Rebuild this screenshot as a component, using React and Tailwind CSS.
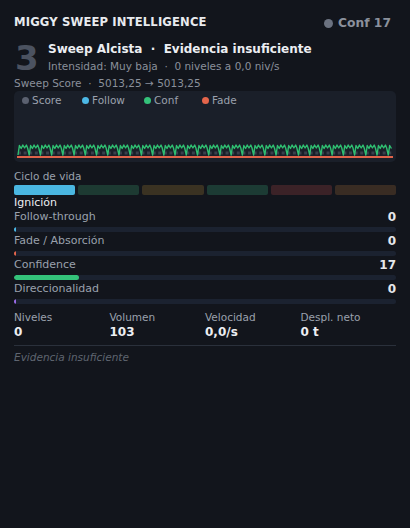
import React from "react";

function Wave() {
  const W = 382, H = 71;
  const x0 = 4, x1 = 378;
  const period = 11.22;
  let g = "";
  let s = "";
  const n = Math.floor((x1 - x0) / period);
  for (let i = 0; i <= n; i++) {
    const b = x0 + i * period;
    const pts = [
      [0, 64], [1.4, 54.5], [3.2, 57.5], [4.8, 54], [6.6, 57], [8.4, 54], [9.6, 57], [11.22, 64],
    ];
    pts.forEach(([dx, y], k) => {
      const x = b + dx;
      if (x > x1) return;
      g += (i === 0 && k === 0 ? "M" : "L") + x.toFixed(2) + " " + y + " ";
    });
  }
  for (let x = x0; x < x1; x += 5.61) {
    s += `M${x.toFixed(2)} 62 L${(x + 3).toFixed(2)} 62 `;
  }
  return (
    <svg width={W} height={H} viewBox={`0 0 ${W} ${H}`} className="absolute left-0 top-0">
      <path d={s} stroke="#3a404c" strokeWidth="3" fill="none" />
      <path d={g} stroke="#2fbf71" strokeWidth="1.4" fill="none" strokeLinejoin="round" />
      <line x1={x0 - 1} y1={66} x2={x1 + 1} y2={66} stroke="#e0634a" strokeWidth="1.8" />
    </svg>
  );
}

function Metric({ label, value, color, pct }) {
  return (
    <div className="flex flex-col mb-[2px]">
      <div className="flex justify-between items-end h-[14px]">
        <span className="text-[11px] text-[#9aa1ad] leading-[14px]">{label}</span>
        <span className="text-[12px] font-bold text-[#e5e7eb] leading-[14px]">{value}</span>
      </div>
      <div className="h-[5px] rounded-full bg-[#1b2230] mt-[3px] overflow-hidden">
        <div className="h-full rounded-full" style={{ width: pct, background: color }} />
      </div>
    </div>
  );
}

export default function App() {
  return (
    <div
      className="w-[410px] h-[528px] bg-[#12151c] px-[14px] pt-[14px] text-[#e5e7eb]"
      style={{ fontFamily: '"DejaVu Sans", sans-serif' }}
    >
      <div className="flex items-center justify-between h-[18px]">
        <span className="text-[11.6px] font-bold tracking-[0.15px] text-[#e8eaee]">MIGGY SWEEP INTELLIGENCE</span>
        <span className="flex items-center gap-[5px] mr-[5px]">
          <span className="w-[9px] h-[9px] rounded-full bg-[#6b7280]" />
          <span className="text-[12.3px] font-bold text-[#8b919c]">Conf 17</span>
        </span>
      </div>
      <div className="flex mt-[8px] h-[36px]">
        <div className="w-[34px] h-[36px] text-[34px] font-bold text-[#4b5260] leading-[34px] pt-[1px] pl-[1px]">3</div>
        <div className="flex flex-col">
          <span className="text-[12px] font-bold text-[#eceef2] leading-[18px]">Sweep Alcista&nbsp; · &nbsp;Evidencia insuficiente</span>
          <span className="text-[10.5px] text-[#8a909b] leading-[14px] mt-[1px]">Intensidad: Muy baja&nbsp; · &nbsp;0 niveles a 0,0 niv/s</span>
        </div>
      </div>
      <div className="text-[10.5px] text-[#8a909b] leading-[14px]">Sweep Score&nbsp; · &nbsp;5013,25 → 5013,25</div>
      <div className="relative h-[71px] rounded-[5px] bg-[#1a1f29] mt-[1px]">
        <div className="flex items-center pl-[8px] pt-[2px] text-[10.5px] text-[#9aa1ad] leading-[14px]">
          <span className="flex items-center gap-[3px] w-[60px]"><span className="w-[7px] h-[7px] rounded-full bg-[#5b6170]" />Score</span>
          <span className="flex items-center gap-[3px] w-[62px]"><span className="w-[7px] h-[7px] rounded-full bg-[#4cb8e6]" />Follow</span>
          <span className="flex items-center gap-[3px] w-[58px]"><span className="w-[7px] h-[7px] rounded-full bg-[#34c27a]" />Conf</span>
          <span className="flex items-center gap-[3px]"><span className="w-[7px] h-[7px] rounded-full bg-[#e4654b]" />Fade</span>
        </div>
        <Wave />
      </div>
      <div className="text-[10.5px] text-[#9aa1ad] leading-[14px] mt-[7px]">Ciclo de vida</div>
      <div className="grid grid-cols-6 gap-[3px] mt-[2px] h-[10px]">
        <div className="rounded-[2px] bg-[#4ab6e0]" />
        <div className="rounded-[2px] bg-[#1d3a32]" />
        <div className="rounded-[2px] bg-[#3a3222]" />
        <div className="rounded-[2px] bg-[#1c3b34]" />
        <div className="rounded-[2px] bg-[#3b2227]" />
        <div className="rounded-[2px] bg-[#392c23]" />
      </div>
      <div className="text-[11px] text-[#eceef2] leading-[14px] mt-[1px]">Ignición</div>
      <div className="flex flex-col">
        <Metric label="Follow-through" value="0" color="#4cb8e6" pct="2px" />
        <Metric label="Fade / Absorción" value="0" color="#e4654b" pct="2px" />
        <Metric label="Confidence" value="17" color="#34c27a" pct="17%" />
        <Metric label="Direccionalidad" value="0" color="#9b6be8" pct="2px" />
      </div>
      <div className="grid grid-cols-4 mt-[4px]">
        {[["Niveles", "0"], ["Volumen", "103"], ["Velocidad", "0,0/s"], ["Despl. neto", "0 t"]].map(([l, v]) => (
          <div key={l} className="flex flex-col">
            <span className="text-[10.5px] text-[#9aa1ad] leading-[14px]">{l}</span>
            <span className="text-[12px] font-bold text-[#eceef2] leading-[14px] mt-[1px]">{v}</span>
          </div>
        ))}
      </div>
      <div className="h-px bg-[#2a303b] mt-[6px]" />
      <div className="text-[10.5px] italic text-[#5f6570] leading-[14px] mt-[4px]">Evidencia insuficiente</div>
    </div>
  );
}
